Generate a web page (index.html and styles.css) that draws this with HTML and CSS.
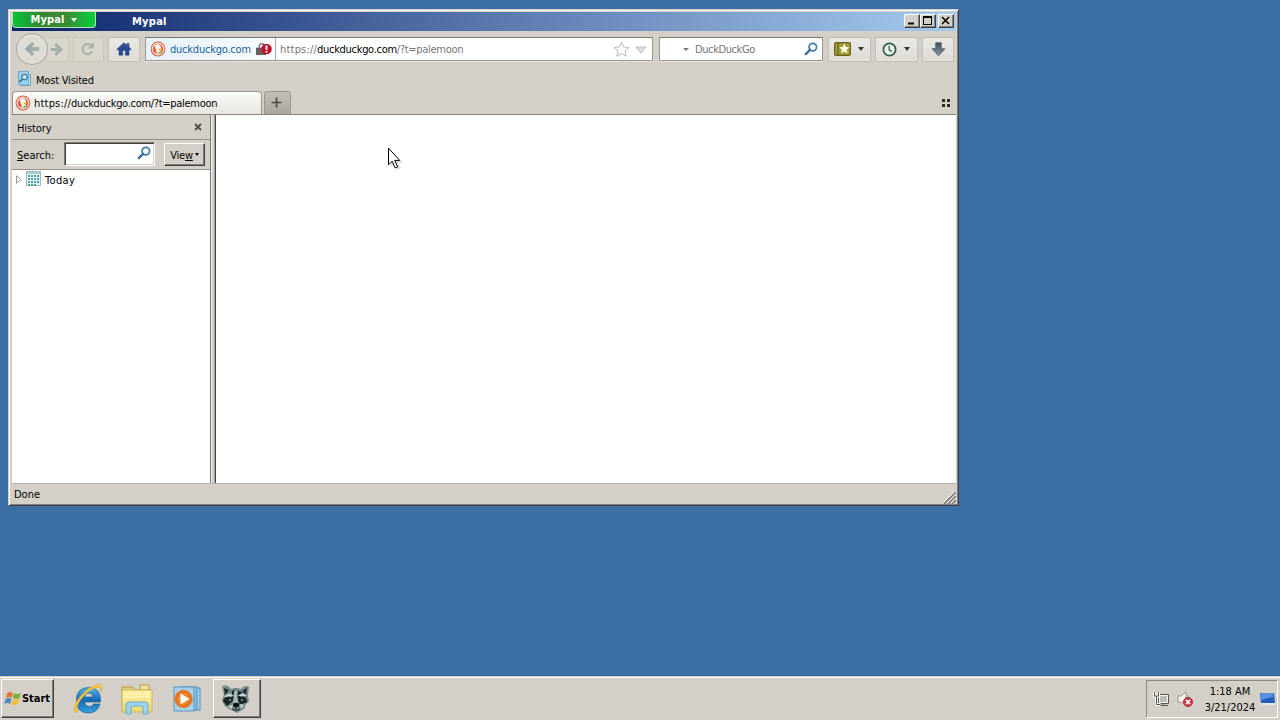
FILE: index.html
```html
<!DOCTYPE html>
<html lang="en">
<head>
<meta charset="utf-8">
<title>Mypal</title>
<link rel="stylesheet" href="styles.css">
</head>
<body>
<svg class="defs" width="0" height="0" aria-hidden="true">
  <defs>
    <linearGradient id="steel" x2="0" y2="1"><stop stop-color="#424e5d"/><stop offset="1" stop-color="#8997a8"/></linearGradient>
    <linearGradient id="fadeblue" x2="1" y2="0"><stop stop-color="#91a1aa"/><stop offset="1" stop-color="#adb5ac"/></linearGradient>
    <linearGradient id="ie" x2="0" y2="1"><stop stop-color="#58b9ec"/><stop offset=".5" stop-color="#1266b4"/><stop offset="1" stop-color="#36a4df"/></linearGradient>
    <linearGradient id="folder" x2="0" y2="1"><stop stop-color="#fff3a4"/><stop offset="1" stop-color="#ecd572"/></linearGradient>
    <radialGradient id="orange"><stop stop-color="#ffac45"/><stop offset="1" stop-color="#e36711"/></radialGradient>
    <symbol id="duck" viewBox="0 0 16 16">
      <circle cx="8" cy="8" r="7.4" fill="#de5638"/><circle cx="8" cy="8" r="6.4" fill="#f8dfd5"/><circle cx="8" cy="8" r="5.1" fill="#dc5b3c"/>
      <path d="M4.500 4.500Q6 2.500 9 3.500Q11.500 5 11 8L10.500 12.500L7 12.800Q6 9 4.500 4.500Z" fill="#fff4e9"/><path d="M8.800 7.800l3.500-.5-.5 1.800-2.800.5z" fill="#e9ae2d"/><path d="M8.500 11l3-.6v2L8.500 12.600z" fill="#66b346"/>
    </symbol>
    <symbol id="lens" viewBox="0 0 14 14"><circle cx="8.8" cy="5.1" r="3.8" fill="#f3fbff" stroke="#437f9e" stroke-width="1.7"/><path d="M6 7.9L1.8 12.1" stroke="#386f97" stroke-width="2.4" stroke-linecap="round"/></symbol>
  </defs>
</svg>
<main class="desktop">
  <section class="window">
    <header class="titlebar">
      <button class="app-button"><span>Mypal</span><i class="caret white"></i></button>
      <h1>Mypal</h1>
      <div class="controls">
        <button><svg width="14" height="12"><path d="M3 8.5h6" stroke="#000" stroke-width="2"/></svg></button>
        <button><svg width="14" height="12" shape-rendering="crispEdges"><path d="M2.5 1.5h8v8h-8zM2 2.5h9" fill="none" stroke="#000"/></svg></button>
        <button class="close"><svg width="14" height="12"><path d="M3 2l7 7m0-7l-7 7" stroke="#000" stroke-width="1.6"/></svg></button>
      </div>
    </header>

    <nav class="toolbar">
      <button class="back"><svg width="16" height="14"><path d="M15 5.4H7L10 2 8 .4 1 7l7 6.6 2-1.7-3-3.3h8z" fill="url(#fadeblue)" stroke="#95a2a2" stroke-width=".6"/></svg></button>
      <button class="tool forward faded"><svg width="13" height="13"><path d="M0 5h6L3.2 2 5.3.3 12 6.5l-6.7 6.2L3.2 11 6 8H0z" fill="#a3aeaa"/></svg></button>
      <button class="tool reload faded"><svg width="16" height="14"><path d="M11 3.5A5 5 0 1 0 12 9.5" fill="none" stroke="#aab2a6" stroke-width="2.2"/><path d="M14 0v6.5H7.5z" fill="#aab2a6"/></svg></button>
      <button class="tool home"><svg width="16" height="14"><path d="M8 .7L.8 7.2l1 1.1L3 7.4v5.8h3.7V8.5h2.8v4.7H13V7.4l1.2.9 1-1.1L13 5.2V1.5h-2v1.9z" fill="#294b96" stroke="#203a72" stroke-width=".5"/></svg></button>
      <div class="url">
        <div class="identity"><svg class="duck" width="16" height="16"><use href="#duck"/></svg><span class="site">duckduckgo.com</span>
          <svg class="lock" width="17" height="13"><path d="M3.3 5V3.5a2.7 2.7 0 0 1 5.4 0V5" fill="none" stroke="#777" stroke-width="1.4"/><rect x="0" y="4.7" width="10" height="7.3" fill="#67605d"/><circle cx="10.5" cy="6" r="5.3" fill="#c21430"/><path d="M10.5 2.5v4.3M10.5 8v1.6" stroke="#fff" stroke-width="1.9"/></svg>
        </div>
        <span class="address"><span class="scheme">https://</span><b>duckduckgo.com</b>/?t=palemoon</span>
        <svg class="star" width="17" height="17"><path d="M8.500 1l2.100 5 5.300.5-4 3.500 1.300 5.300-4.700-2.900-4.700 2.900 1.300-5.300-4-3.500 5.300-.5z" fill="#fff" stroke="#bcbcbc"/></svg>
        <svg class="drop" width="12" height="8"><path d="M1 1h10L6 7z" fill="#dedede" stroke="#bdbdbd"/></svg>
      </div>
      <div class="web-search"><i class="caret"></i><span class="engine">DuckDuckGo</span><svg width="14" height="14"><use href="#lens"/></svg></div>
      <button class="tool wide marks"><svg width="17" height="14"><rect x=".6" y=".6" width="15.8" height="12.8" rx="1.4" fill="#a49a36" stroke="#69641e" stroke-width="1.2"/><path d="M4 1v12" stroke="#6c6726" stroke-width="1.3"/><path d="M10.3 1.5l1.5 3.4 3.6.4-2.7 2.4.8 3.7-3.2-1.9-3.2 1.9.8-3.7-2.7-2.4 3.6-.4z" fill="#fffce9"/></svg><i class="caret"></i></button>
      <button class="tool wide recent"><svg width="15" height="15"><circle cx="7.5" cy="7.5" r="6.1" fill="#eef4e9" stroke="#315f51" stroke-width="1.8"/><path d="M7.2 3.7v4.1l2.6 1.6" fill="none" stroke="#315f51" stroke-width="1.3"/></svg><i class="caret"></i></button>
      <button class="tool download"><svg width="15" height="15"><path d="M4.8.8h5.4v6h3.6L7.5 13.7 1.2 6.8h3.6z" fill="url(#steel)" stroke="#566170"/></svg></button>
    </nav>

    <div class="bookmarks"><svg width="15" height="16"><path d="M3.500 3.500h10v11h-10z" fill="#b9dcef" stroke="#739fc0"/><path d="M1.500.5h10v13.500h-10z" fill="#9ed0ed" stroke="#6fa9cd"/><circle cx="7.500" cy="6" r="2.700" fill="#d3edfa" stroke="#397ea9" stroke-width="1.300"/><path d="M5.500 8l-3 3" stroke="#397ea9" stroke-width="2"/></svg><span>Most Visited</span></div>

    <div class="tabs">
      <div class="tab"><svg width="16" height="16"><use href="#duck"/></svg><span><span class="scheme">https://</span>duckduckgo.com/?t=palemoon</span></div>
      <button class="new-tab"><svg width="11" height="11"><path d="M5.5 .5v10M.5 5.5h10" stroke="#4c4c49" stroke-width="1.7"/></svg></button>
      <svg class="groups" width="8" height="8" shape-rendering="crispEdges"><path d="M0 0h3v3H0zM5 0h3v3H5zM0 5h3v3H0zM5 5h3v3H5z" fill="#272925"/></svg>
    </div>

    <div class="workspace">
      <aside>
        <div class="side-head"><h2>History</h2><svg width="8" height="8"><path d="M1 1l6 6m0-6L1 7" stroke="#4d4d49" stroke-width="1.8"/></svg></div>
        <div class="side-search"><label><u>S</u>earch:</label><div class="field"><svg width="14" height="14"><use href="#lens"/></svg></div><button><span>Vie<u>w</u></span><i class="caret tiny"></i></button></div>
        <div class="history-row"><svg width="6" height="9"><path d="M.5.8l4.5 3.7L.5 8.2z" fill="#fff" stroke="#999"/></svg>
          <svg class="calendar" width="15" height="15" shape-rendering="crispEdges"><path d="M.5.5h14v14H.5z" fill="#e8f6f7" stroke="#9dbbc0"/><path d="M1 1h13v2H1z" fill="#a7d2d1"/><path d="M2 5h11M2 8h11M2 11h11M2 13.500h9" stroke="#4aa4a8" stroke-width="2" stroke-dasharray="2 1"/></svg><span>Today</span></div>
      </aside>
      <div class="splitter"></div>
      <div class="page"></div>
    </div>
    <footer><span>Done</span><svg width="12" height="12"><path d="M0 12L12 0M4 12l8-8M8 12l4-4" stroke="#807e79" stroke-width="1.7"/><path d="M-1 11L11-1M3 11l9-9M7 11l5-5" stroke="#fff" stroke-width=".9"/></svg></footer>
  </section>
  <svg class="pointer" width="18" height="25"><path d="M4 4v16l4-3 3 6 3-2-3-5h5z" fill="#777" opacity=".24"/><path d="M1.5 1.2v16.500l3.700-3.400 3 6.700 2.500-1.100-3-6.500h5z" fill="#fff" stroke="#000"/></svg>
</main>

<div class="taskbar">
  <button class="start"><svg width="18" height="18"><path d="M3 3q3-2 6 0L7.7 8Q5 6 2 8z" fill="#e47632"/><path d="M10 3q4 2 7 0L15.5 8q-3 2-6.5 0z" fill="#7cad40"/><path d="M1.8 9Q5 7 7.500 9L6 14q-3-2-6 0z" fill="#4a8ac1"/><path d="M8.600 9q3 2 6.800 0l-1.500 5q-4 2-6.800 0z" fill="#f2bb35"/></svg><b>Start</b></button>
  <div class="launch">
    <svg class="ie" width="32" height="32"><path d="M4.500 17q0-12.500 12.500-12.500 12 0 11.500 14.500H12.500q1 4.500 5 4.500 3 0 4-2.500h6.500q-2.500 9-11.500 9Q4.500 30 4.500 17m8-3h8.500q-.5-4-4.300-4-3.700 0-4.200 4" fill="url(#ie)" stroke="#1c5c9b" stroke-width=".7"/><path d="M7 27Q1 32.500 2 25.500C4 15 17 3 26 1.500q5-.5 3 7 0-5-4.500-4C15 7.500 7 17 4.500 25q-.7 3.500 2.500 2" fill="#f5c83e" stroke="#c89d34" stroke-width=".5"/></svg>
    <svg class="explorer" width="34" height="32"><path d="M2 4h11l2 3h14v20H2z" fill="#e4cd79" stroke="#b89942"/><path d="M20 2h9v5h-9z" fill="#f3e49a" stroke="#b09645"/><path d="M2 7h30v22H2z" fill="url(#folder)" stroke="#cbb363"/><path d="M6 30v-8q0-3 3-3h16q3 0 3 3v9h-5v-6q0-2-2-2h-8q-2 0-2 2v6H6z" fill="#9bd4ed" stroke="#6baeca"/><path d="M4 11h26M4 14h26" stroke="#fff7c6"/></svg>
    <svg class="media" width="31" height="29"><path d="M10 4h17v22H10z" fill="#a9d2e9" stroke="#528fba"/><path d="M6 3h18v23H6z" fill="#8dbfdd" stroke="#528fba"/><path d="M1 3h20v24H1z" fill="#a8d2e9" stroke="#5795bf"/><circle cx="10.5" cy="15" r="8.8" fill="url(#orange)" stroke="#d78c4d"/><path d="M7.500 9.500l9 5.500-9 5.500z" fill="#fff"/></svg>
  </div>
  <button class="task-item"><svg width="32" height="31"><path d="M2 3q6-2 9 3 5-2 10 0 4-5 8-2l-1 9 1 6-3 2-2 5-7 4-8-4-5-4-2-5 2-5z" fill="#72888a"/><path d="M4 5l5 2-4 5zM27 5l-5 3 4 4z" fill="#1b2929"/><path d="M12 8l3-1-1 10-7 6-4-5q2-6 9-4zM18 8l4 1-2 5q7-1 7 5l-7 3-3-7z" fill="#172627"/><path d="M4 14q5-6 10-1M18 13q4-5 9 0M7 23q3 1 6-2l-1 5zM24 22l-4-1 1 5z" fill="#cbd5d1"/><path d="M14 8h3l1 12-2 3-3-3z" fill="#aab9b6"/><ellipse cx="16" cy="22" rx="3" ry="2.2" fill="#061112"/><path d="M16 23v3M12 26q4 3 8 0" stroke="#182323" fill="none"/><circle cx="10" cy="17" r="1" fill="#91a09d"/><circle cx="22" cy="17" r="1" fill="#91a09d"/></svg></button>
  <div class="tray">
    <svg width="17" height="17"><path d="M5.500 3.500h10v9h-10z" fill="#bdbeb9" stroke="#555"/><path d="M6.500 4.500h8v7h-8z" fill="none" stroke="#f7f7f3"/><path d="M7 14.500h8M10 12v3" stroke="#555"/><path d="M1.500 1v4h4V1M3.500 5v8.500h4" fill="none" stroke="#fff" stroke-width="3"/><path d="M1.500 1v4h4V1M3.500 5v8.500h4" fill="none" stroke="#555" stroke-width="1.1"/></svg>
    <svg class="sound" width="18" height="17"><path d="M1 5h3l5-4v14l-5-4H1z" fill="#f5f4ef" stroke="#99958b"/><path d="M11 4q2 3 0 6" stroke="#aaa" fill="none"/><circle cx="11" cy="11" r="4.5" fill="#cc3443" stroke="#a82c38"/><path d="M8.900 8.900l4.200 4.200m0-4.200l-4.200 4.200" stroke="#fff" stroke-width="1.5"/></svg>
    <div class="clock"><span>1:18 AM</span><span class="date">3/21/2024</span></div>
    <svg class="show-desktop" width="15" height="14"><path d="M0 1h14l1 10H1z" fill="#245dbd"/><path d="M1 1h12v4L1 8z" fill="#5591dd"/><path d="M1 12h14" stroke="#dce6ec" stroke-width="2"/></svg>
  </div>
</div>
</body>
</html>
```
FILE: styles.css
```css
* { box-sizing: border-box; }
body { margin: 0; width: 1280px; height: 720px; display: flex; flex-direction: column; overflow: hidden; background: #3a6ea5; color: #000; font: 11px/14px "DejaVu Sans Condensed", "DejaVu Sans", sans-serif; }
button, h1, h2 { margin: 0; padding: 0; border: 0; font: inherit; color: inherit; }
button { display: flex; align-items: center; justify-content: center; background: #d4d0c8; flex-shrink: 0; }
svg { display: block; flex-shrink: 0; }
span, label { white-space: nowrap; }
.defs { position: absolute; }
.desktop { height: 676px; padding: 9px 0 0 8px; position: relative; }
.window { width: 951px; height: 497px; display: flex; flex-direction: column; padding: 2px 2px 1px 3px; background: #d4d0c8; border: 1px solid #d4d0c8; border-right-color: #404040; border-bottom-color: #404040; box-shadow: inset 1px 1px #fff, inset -1px -1px #808080; }
.titlebar { width: 944px; height: 19px; display: flex; align-items: flex-start; background: linear-gradient(90deg, #0a246a, #a6caf0); color: #fff; font-weight: bold; }
.app-button { width: 84px; height: 16px; gap: 7px; border: 1px solid #bcdebc; border-top: 0; border-radius: 0 0 4px 4px; background: linear-gradient(90deg, #00c43a, #368730 35%, #3b8b34 65%, #03d23f); }
.app-button span { padding-top: 1px; letter-spacing: .1px; }
.titlebar h1 { margin: 3px 0 0 36px; letter-spacing: .25px; }
.controls { display: flex; margin: 2px 2px 0 auto; }
.controls button { width: 16px; height: 14px; border: 1px solid #fff; border-right-color: #404040; border-bottom-color: #404040; box-shadow: inset -1px -1px #808080; }
.controls .close { margin-left: 2px; }
.caret { display: block; width: 0; height: 0; border: solid transparent; border-width: 4px 3.5px 0; border-top-color: #343434; flex-shrink: 0; }
.caret.white { border-top-color: #fff; }
.toolbar { height: 37px; display: flex; align-items: center; padding-left: 4px; }
.back { width: 32px; height: 32px; padding-right: 1px; border: 1px solid #a6a39c; border-radius: 50%; background: #dfdcd6; box-shadow: inset 0 0 0 1px #e9e6df; }
.tool { height: 25px; border: 1px solid #bebbb4; border-radius: 2px; background: linear-gradient(#eae8e4, #dedbd5); box-shadow: inset 0 0 0 1px #e9e7e2; }
.tool.faded { border-color: #c9c6bb; background: #d9d6ce; box-shadow: none; }
.forward { width: 21px; padding-right: 2px; border-left: 0; }
.reload { width: 31px; margin-left: 4px; padding-right: 2px; }
.home { width: 32px; margin-left: 4px; }
.url { display: flex; align-items: center; width: 508px; height: 24px; margin-left: 5px; border: 1px solid #99978f; border-top-color: #77756f; background: #fff; box-shadow: 0 1px #e8e5df; }
.identity { display: flex; align-items: center; width: 130px; height: 22px; padding-left: 4px; border-right: 1px solid #aaa; background: linear-gradient(90deg, #e6f1f9, #f9fcff); }
.site { width: 81px; margin-left: 4px; padding-top: 1px; color: #215f9c; letter-spacing: -.22px; }
.lock { margin-left: 5px; }
.address { margin-left: 4px; padding-top: 2px; color: #777; letter-spacing: -.3px; }
.scheme { letter-spacing: .2px; }
.address b { font-weight: normal; color: #000; }
.star { margin-left: auto; }
.drop { margin: 1px 5px 0 5px; }
.web-search { display: flex; align-items: center; width: 164px; height: 24px; margin-left: 6px; padding: 0 4px 0 23px; border: 1px solid #99978f; border-top-color: #77756f; background: #fff; box-shadow: 0 1px #e8e5df; color: #747474; }
.web-search .caret { border-width: 3px 3px 0; border-top-color: #777; margin-top: 1px; }
.web-search svg { margin-left: auto; margin-bottom: 1px; }
.engine { margin-left: 6px; padding-top: 2px; letter-spacing: -.4px; }
.wide { width: 43px; gap: 7px; margin-left: 5px; padding-right: 1px; }
.wide.recent { margin-left: 4px; }
.download { width: 32px; margin-left: 4px; }
.bookmarks { height: 23px; display: flex; align-items: center; gap: 4px; padding: 0 0 0 5px; }
.bookmarks span { padding-top: 3px; letter-spacing: -.2px; }
.tabs { height: 24px; display: flex; align-items: flex-end; border-bottom: 1px solid #87847d; }
.tab { width: 250px; height: 23px; display: flex; align-items: center; gap: 2px; padding-left: 3px; border: 1px solid #99968e; border-bottom: 0; border-radius: 4px 4px 0 0; background: linear-gradient(#fbfbfa, #e8e5df); }
.tab > span { letter-spacing: -.3px; padding-top: 3px; }
.tab svg { margin-left: -1px; margin-right: 1px; }
.new-tab { width: 27px; height: 23px; margin-left: 2px; padding-right: 2px; border: 1px solid #99968e; border-bottom: 0; border-radius: 4px 4px 0 0; background: linear-gradient(#c4c0b8, #aaa69e); }
.groups { margin: 0 6px 7px auto; }
.workspace { display: flex; height: 369px; width: 944px; }
aside { width: 199px; background: #fff; border-right: 1px solid #777; }
.side-head { display: flex; align-items: center; justify-content: space-between; height: 25px; padding: 1px 8px 0 5px; background: #d4d0c8; border-bottom: 1px solid #969289; }
.side-head h2 { padding-top: 3px; letter-spacing: -.1px; }
.side-search { display: flex; align-items: center; height: 30px; padding-left: 5px; background: #d4d0c8; border-bottom: 1px solid #96928a; }
.side-search label { width: 47px; padding-top: 3px; }
.field { width: 91px; height: 24px; display: flex; justify-content: flex-end; padding: 3px 3px 0 0; background: #fff; border: 1px solid #807d76; border-right-color: #fff; border-bottom-color: #fff; box-shadow: inset 1px 1px #404040, inset -1px -1px #d4d0c8; }
.side-search button { width: 41px; height: 23px; margin: 1px 0 0 9px; gap: 2px; border: 1px solid #fff; border-right-color: #404040; border-bottom-color: #404040; box-shadow: inset -1px -1px #808080; }
.side-search button span { padding-top: 2px; letter-spacing: -.2px; }
.caret.tiny { border-width: 3px 2.5px 0; border-top-color: #000; }
.history-row { height: 20px; display: flex; align-items: center; padding-left: 4px; }
.history-row span { padding-top: 2px; letter-spacing: .35px; }
.calendar { margin: 0 4px 2px 4px; }
.splitter { width: 5px; background: linear-gradient(90deg, #f6f4ef 1px, #d4d0c8 1px 3px, #aaa69f 3px 4px, #444 4px); }
.page { flex: 1; background: #fff; }
footer { display: flex; justify-content: space-between; align-items: flex-end; width: 944px; height: 21px; padding: 0 0 1px 2px; border-top: 1px solid #b9b6af; }
footer span { padding-bottom: 1px; }
footer svg { position: relative; top: 1px; }
.pointer { position: absolute; left: 387px; top: 147px; }
.taskbar { display: flex; height: 44px; padding: 2px 2px 2px 1px; background: #d4d0c8; border-top: 1px solid #d4d0c8; box-shadow: inset 0 1px #fff; }
.start, .task-item { height: 39px; border: 1px solid #fff; border-right: 1px solid #404040; border-bottom: 1px solid #404040; box-shadow: inset -1px -1px #808080; }
.start { width: 53px; padding-top: 1px; font: bold 11px/14px "DejaVu Sans Condensed", sans-serif; }
.start svg { margin-left: -1px; }
.launch { display: flex; align-items: center; width: 147px; margin-left: 12px; padding-left: 6px; }
.explorer { margin-left: 16px; }
.media { margin-left: 19px; }
.task-item { width: 48px; }
.task-item svg { margin: 0 2px 1px 0; }
.tray { display: flex; align-items: center; width: 132px; height: 38px; margin-top: 1px; margin-left: auto; padding-left: 6px; border: 1px solid #8d8981; border-right-color: #fff; border-bottom-color: #fff; }
.sound { margin-left: 7px; }
.clock { width: 58px; display: flex; flex-direction: column; text-align: center; gap: 2px; margin-left: 6px; padding-top: 2px; letter-spacing: -.05px; }
.show-desktop { margin-left: 1px; }
```
